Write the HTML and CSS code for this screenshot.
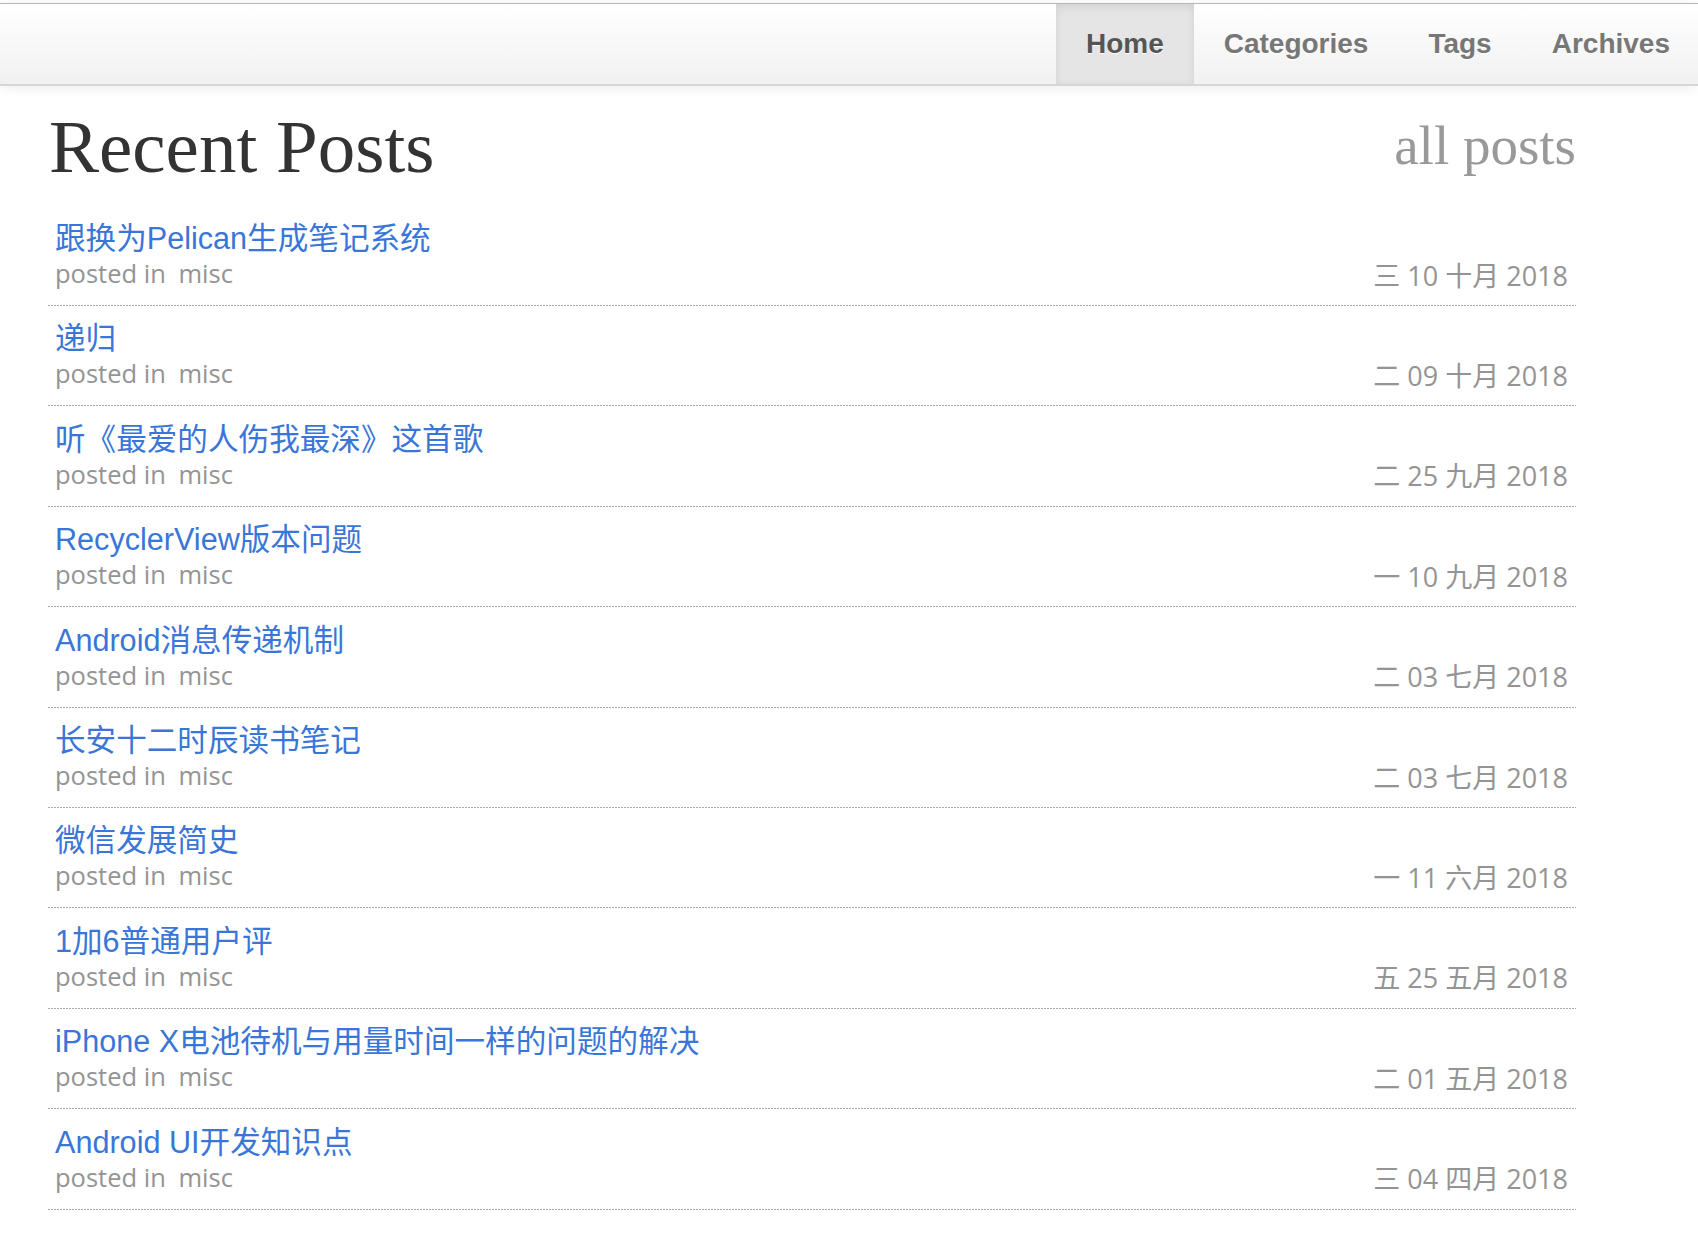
FILE: index.html
```html
<!DOCTYPE html>
<html lang="zh-CN">
<head>
<meta charset="utf-8">
<title>Recent Posts</title>
<link rel="stylesheet" href="styles.css">
</head>
<body>
<div class="topgap"></div>
<header class="navbar">
  <nav class="nav">
    <a class="nav-link active" href="#">Home</a>
    <a class="nav-link" href="#">Categories</a>
    <a class="nav-link" href="#">Tags</a>
    <a class="nav-link" href="#">Archives</a>
  </nav>
</header>
<main class="container">
  <div class="page-header">
    <h1 class="page-title">Recent Posts</h1>
    <a class="all-posts" href="#">all posts</a>
  </div>
  <ul class="post-list">
    <li class="post">
      <div class="post-main"><a class="post-title" href="#">跟换为Pelican生成笔记系统</a><div class="post-meta">posted in <span class="cat">misc</span></div></div>
      <div class="post-date">三 10 十月 2018</div>
    </li>
    <li class="post">
      <div class="post-main"><a class="post-title" href="#">递归</a><div class="post-meta">posted in <span class="cat">misc</span></div></div>
      <div class="post-date">二 09 十月 2018</div>
    </li>
    <li class="post">
      <div class="post-main"><a class="post-title" href="#">听《最爱的人伤我最深》这首歌</a><div class="post-meta">posted in <span class="cat">misc</span></div></div>
      <div class="post-date">二 25 九月 2018</div>
    </li>
    <li class="post">
      <div class="post-main"><a class="post-title" href="#">RecyclerView版本问题</a><div class="post-meta">posted in <span class="cat">misc</span></div></div>
      <div class="post-date">一 10 九月 2018</div>
    </li>
    <li class="post">
      <div class="post-main"><a class="post-title" href="#">Android消息传递机制</a><div class="post-meta">posted in <span class="cat">misc</span></div></div>
      <div class="post-date">二 03 七月 2018</div>
    </li>
    <li class="post">
      <div class="post-main"><a class="post-title" href="#">长安十二时辰读书笔记</a><div class="post-meta">posted in <span class="cat">misc</span></div></div>
      <div class="post-date">二 03 七月 2018</div>
    </li>
    <li class="post">
      <div class="post-main"><a class="post-title" href="#">微信发展简史</a><div class="post-meta">posted in <span class="cat">misc</span></div></div>
      <div class="post-date">一 11 六月 2018</div>
    </li>
    <li class="post">
      <div class="post-main"><a class="post-title" href="#">1加6普通用户评</a><div class="post-meta">posted in <span class="cat">misc</span></div></div>
      <div class="post-date">五 25 五月 2018</div>
    </li>
    <li class="post">
      <div class="post-main"><a class="post-title" href="#">iPhone X电池待机与用量时间一样的问题的解决</a><div class="post-meta">posted in <span class="cat">misc</span></div></div>
      <div class="post-date">二 01 五月 2018</div>
    </li>
    <li class="post">
      <div class="post-main"><a class="post-title" href="#">Android UI开发知识点</a><div class="post-meta">posted in <span class="cat">misc</span></div></div>
      <div class="post-date">三 04 四月 2018</div>
    </li>
  </ul>
</main>
</body>
</html>
```

FILE: styles.css
```css
html, body {
  margin: 0;
  padding: 0;
  background: #fff;
}

body {
  font-family: "Liberation Sans", "Noto Sans CJK SC", sans-serif;
  color: #333;
}

.topgap {
  height: 3px;
  background: #fff;
}

.navbar {
  position: relative;
  z-index: 2;
  height: 80px;
  border-top: 1px solid #b8b8b8;
  border-bottom: 2px solid #d6d6d6;
  background: linear-gradient(to bottom, #ffffff 0%, #f1f1f1 100%);
  box-shadow: 0 2px 12px rgba(0, 0, 0, 0.07);
  display: flex;
  justify-content: flex-end;
}

.nav {
  display: flex;
  margin-right: -2px;
}

.nav-link {
  display: block;
  padding: 0 30px;
  height: 80px;
  line-height: 80px;
  font-family: "Liberation Sans", Arial, sans-serif;
  font-weight: bold;
  font-size: 28px;
  color: #777;
  text-decoration: none;
  text-shadow: 0 1px 0 #fff;
}

.nav-link.active {
  color: #555;
  background: #e5e5e5;
  box-shadow: inset 0 3px 9px rgba(0, 0, 0, 0.09);
}

.container {
  width: 1528px;
  padding-left: 48px;
}

.page-header {
  display: flex;
  justify-content: space-between;
  align-items: flex-start;
  padding-top: 19px;
}

.page-title {
  margin: 0;
  font-family: "Liberation Serif", "Times New Roman", serif;
  font-weight: normal;
  font-size: 75px;
  line-height: 84px;
  color: #333;
  padding-left: 1px;
}

.all-posts {
  margin-top: 11px;
  font-family: "Liberation Serif", "Times New Roman", serif;
  font-size: 55px;
  line-height: 60px;
  color: #999;
  text-decoration: none;
}

.post-list {
  list-style: none;
  margin: 17px 0 0 0;
  padding: 0;
}

.post {
  display: flex;
  justify-content: space-between;
  align-items: flex-start;
  height: 100.4px;
  box-sizing: border-box;
  padding: 14px 8px 0 7px;
  background-image: repeating-linear-gradient(to right, #a9a9a9 0, #a9a9a9 2px, transparent 2px, transparent 3px);
  background-size: 100% 1.4px;
  background-position: left bottom;
  background-repeat: no-repeat;
}

.post-main {
  display: flex;
  flex-direction: column;
  align-items: flex-start;
}

.post-title {
  font-family: "Liberation Sans", "Noto Sans CJK SC", sans-serif;
  font-size: 30.6px;
  line-height: 36px;
  color: #3a76d8;
  text-decoration: none;
}

.post-meta {
  font-family: "Open Sans", "Noto Sans CJK SC", sans-serif;
  font-size: 25.5px;
  line-height: 34px;
  color: #949494;
}

.post-meta .cat {
  margin-left: 6px;
}

.post-date {
  align-self: flex-end;
  font-family: "Open Sans", "Noto Sans CJK SC", sans-serif;
  font-size: 27px;
  line-height: 30px;
  color: #949494;
  margin-bottom: 15.8px;
}
```
